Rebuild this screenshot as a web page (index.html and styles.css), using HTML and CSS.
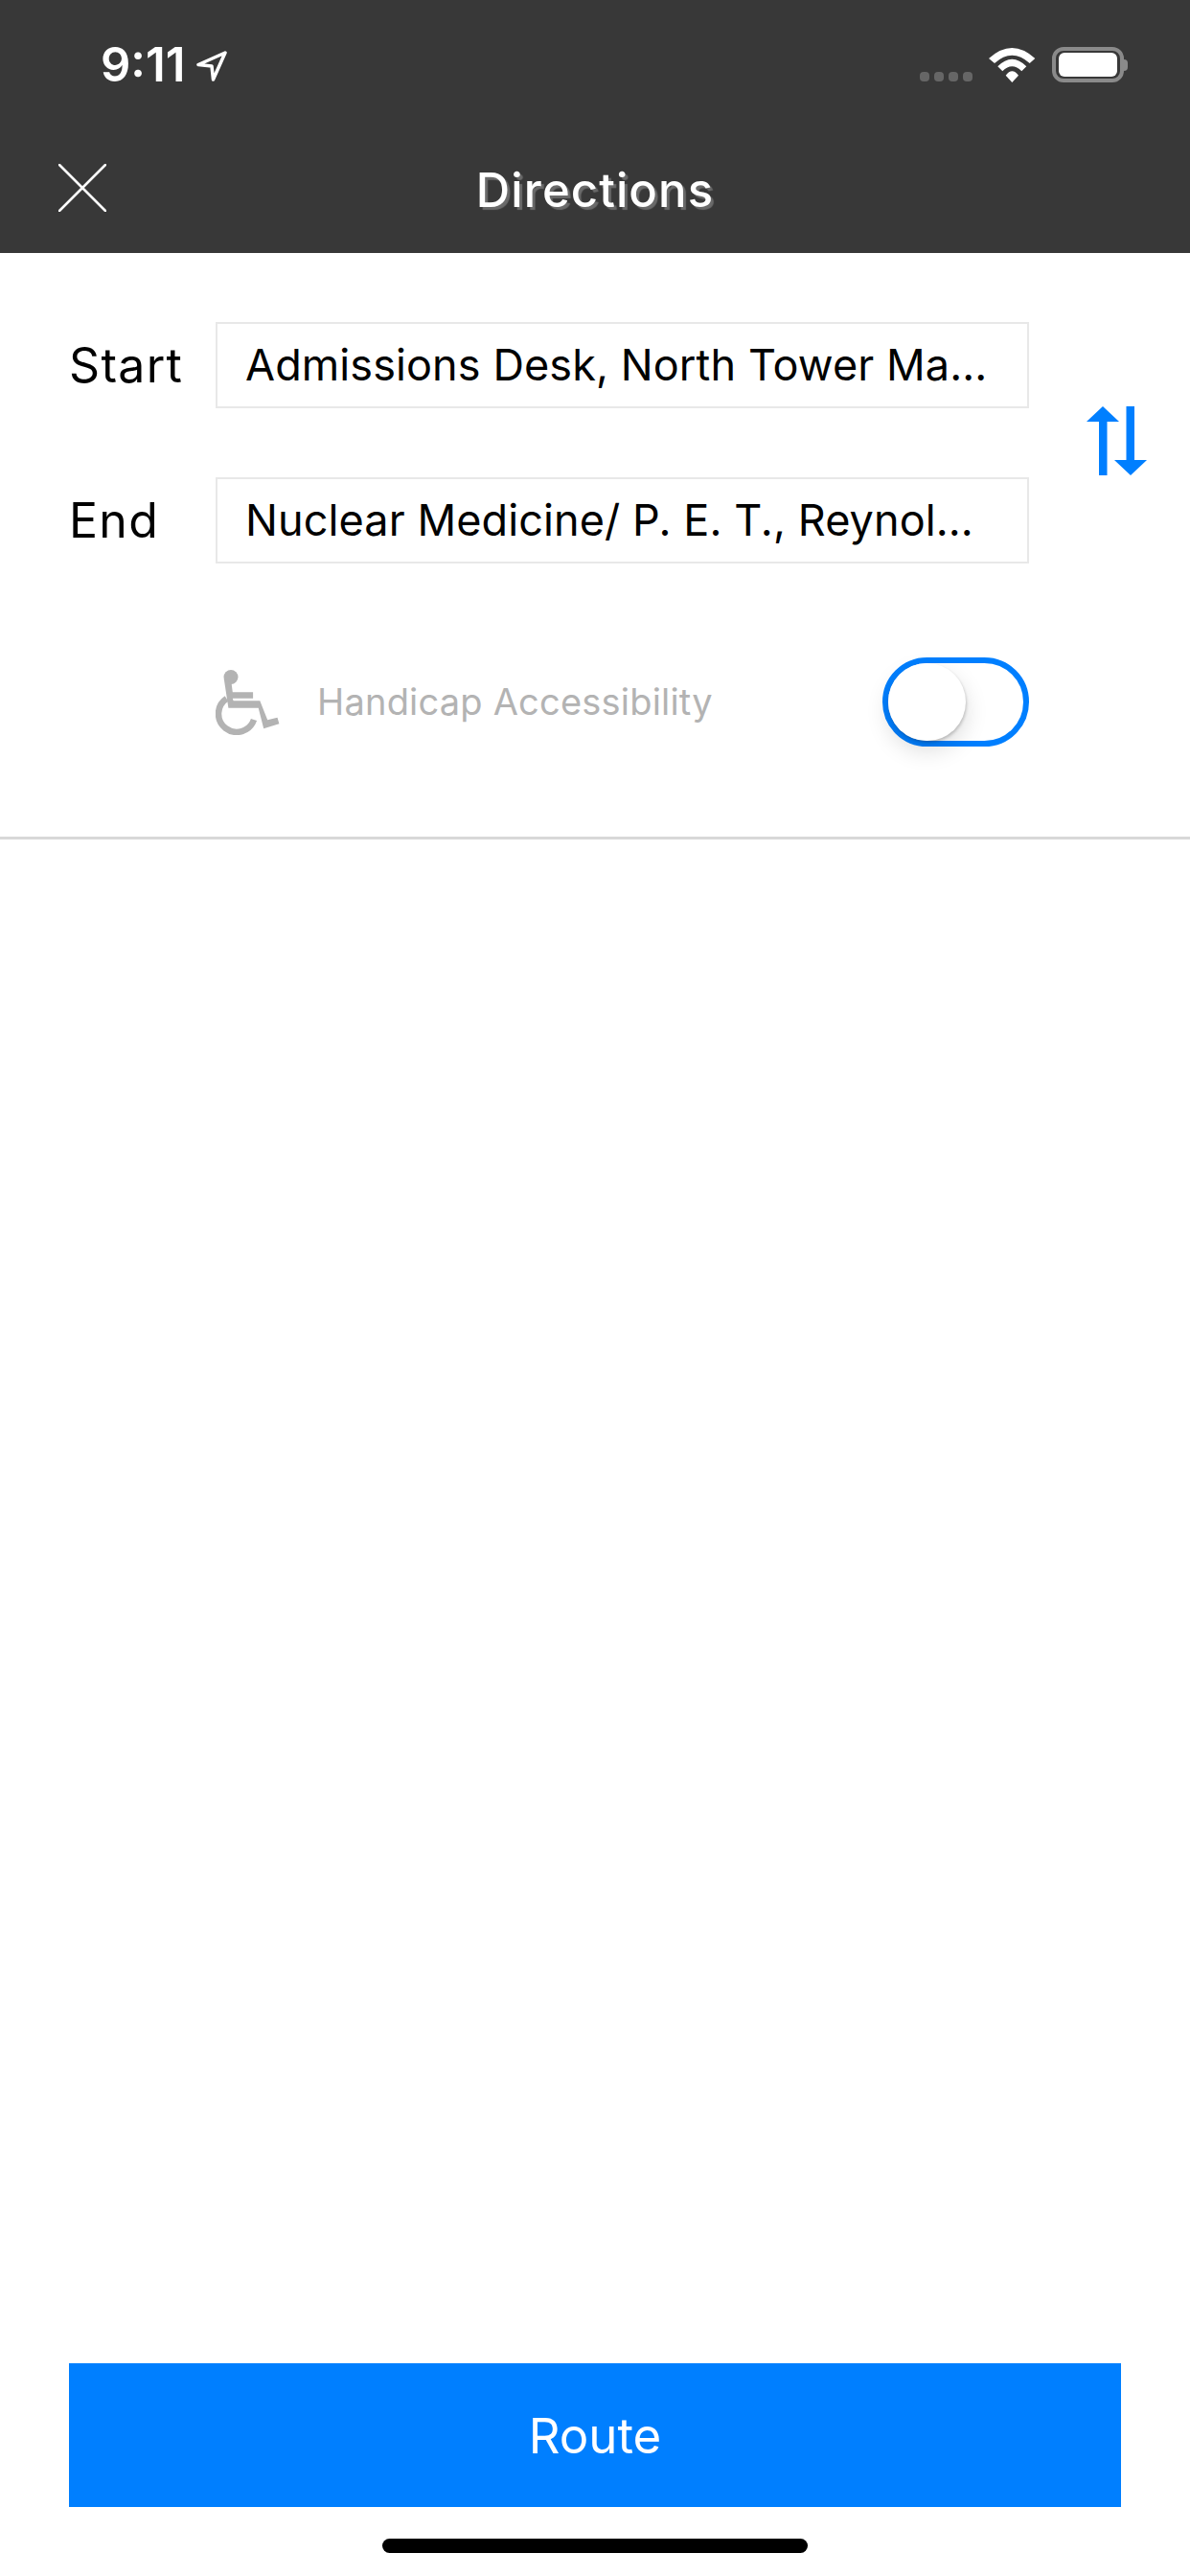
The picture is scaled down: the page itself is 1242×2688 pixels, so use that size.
FILE: index.html
```html
<!DOCTYPE html>
<html lang="en">
<head>
    <meta charset="UTF-8">
    <meta name="viewport" content="width=device-width, initial-scale=1.0">
    <title>Directions</title>
    <link rel="stylesheet" href="styles.css">
</head>
<body>
    <div class="screen">
        <div class="top-bar">
            <div class="status-bar">
                <div class="status-left">
                    <span class="status-time">9:11</span>
                    <svg class="location-icon" width="32" height="32" viewBox="0 0 32 32">
                        <path d="M30 2 L2 14.500 L16 16 L17.500 30 Z" fill="none" stroke="#fff" stroke-width="3.500" stroke-linejoin="round"/>
                    </svg>
                </div>
                <div class="status-right">
                    <div class="signal-dots"><i></i><i></i><i></i><i></i></div>
                    <svg class="wifi-icon" width="49" height="36" viewBox="0 0 49 36">
                        <path d="M0 11 Q24.300 -11 48.300 11 L42.700 16 Q24.300 -0.600 6 16 Z" fill="#fff"/>
                        <path d="M9.300 19.300 Q24.300 4.100 39.300 19.300 L34.300 24.300 Q24.300 14.300 14.300 24.300 Z" fill="#fff"/>
                        <path d="M17.700 28.700 Q24.300 19.900 31 28.700 L24.300 36 Z" fill="#fff"/>
                    </svg>
                    <div class="battery">
                        <div class="battery-level"></div>
                    </div>
                    <div class="battery-nub"></div>
                </div>
            </div>
            <div class="nav-bar">
                <svg class="close-icon" width="50" height="50" viewBox="0 0 50 50">
                    <path d="M1 1 L49 49 M49 1 L1 49" stroke="#fff" stroke-width="2.500" stroke-linecap="round"/>
                </svg>
                <h1 class="nav-title">Directions</h1>
            </div>
        </div>

        <div class="form">
            <div class="fields">
                <div class="field-row">
                    <label class="field-label">Start</label>
                    <div class="field-box">Admissions Desk, North Tower Ma...</div>
                </div>
                <div class="field-row">
                    <label class="field-label">End</label>
                    <div class="field-box">Nuclear Medicine/ P. E. T., Reynol...</div>
                </div>
            </div>
            <svg class="swap-icon" width="63" height="72" viewBox="0 0 63 72">
                <path d="M17 0 L34 16 L21.500 16 L21.500 72 L13 72 L13 16 L0 16 Z" fill="#007fff"/>
                <path d="M41.500 0 L50 0 L50 56 L63 56 L46 72 L29 56 L41.500 56 Z" fill="#007fff"/>
            </svg>
        </div>

        <div class="access-row">
            <svg class="wheelchair-icon" width="67" height="68" viewBox="0 0 67 68">
                <circle cx="16" cy="7.500" r="7.500" fill="#b3b3b3"/>
                <path d="M8.700 9 L13.400 39.700 L44.700 39.700 L50.200 61.300 L66.400 56.300 L64.500 49.700 L54.200 52.300 L46.300 32.300 L18.600 32.300 L17.800 29.700 L39.100 29.700 L39.100 23.300 L17.800 23.300 L16.600 14 Z" fill="#b3b3b3"/>
                <path d="M11.500 30 A19 19 0 1 0 40 52" fill="none" stroke="#b3b3b3" stroke-width="6.500"/>
            </svg>
            <span class="access-label">Handicap Accessibility</span>
            <div class="toggle">
                <div class="toggle-knob"></div>
            </div>
        </div>

        <div class="divider"></div>

        <div class="spacer"></div>

        <button class="route-button">Route</button>
        <div class="home-bar"></div>
    </div>
</body>
</html>
```

FILE: styles.css
```css
html, body {
    margin: 0;
    padding: 0;
    background-color: #fff;
}
.screen {
    width: 1242px;
    height: 2688px;
    display: flex;
    flex-direction: column;
    font-family: Inter, "Noto Sans", sans-serif;
    overflow: hidden;
}
.top-bar {
    height: 264px;
    background-color: #383838;
    color: #fff;
}
.status-bar {
    height: 132px;
    display: flex;
    justify-content: space-between;
    align-items: flex-start;
    padding: 49px 65px 0 105px;
    box-sizing: border-box;
}
.status-left {
    display: flex;
    align-items: center;
    height: 37px;
}
.status-time {
    font-size: 49px;
    font-weight: 600;
    line-height: 37px;
}
.location-icon {
    margin-left: 12px;
    margin-top: 2px;
}
.status-right {
    display: flex;
    align-items: center;
    height: 37px;
}
.signal-dots {
    display: flex;
    gap: 5px;
    align-self: flex-end;
    margin-bottom: 1px;
    margin-right: 17px;
}
.signal-dots i {
    width: 10px;
    height: 10px;
    border-radius: 4px;
    background-color: #666;
}
.wifi-icon {
    margin-right: 17px;
}
.battery {
    width: 75px;
    height: 37px;
    box-sizing: border-box;
    border: 4px solid #8a8a8a;
    border-radius: 12px;
    padding: 2px 3px;
}
.battery-level {
    height: 100%;
    background-color: #fff;
    border-radius: 6px;
}
.battery-nub {
    width: 4px;
    height: 12px;
    background-color: #8a8a8a;
    border-radius: 0 6px 6px 0;
}
.nav-bar {
    height: 132px;
    display: flex;
    align-items: center;
    justify-content: center;
    position: relative;
}
.close-icon {
    position: absolute;
    left: 61px;
    top: 39px;
}
.nav-title {
    margin: 2px 0 0;
    font-size: 49px;
    font-weight: 500;
    letter-spacing: 1.1px;
    line-height: 60px;
    text-shadow: 3px 3px 1px rgba(255, 255, 255, 0.25);
}
.form {
    display: flex;
    align-items: center;
    padding: 72px 0 0 72px;
}
.fields {
    display: flex;
    flex-direction: column;
    gap: 72px;
}
.field-row {
    display: flex;
    align-items: center;
}
.field-label {
    width: 153px;
    font-size: 50px;
    letter-spacing: 1.3px;
    color: #000;
}
.field-box {
    width: 849px;
    height: 90px;
    box-sizing: border-box;
    border: 2px solid #e8e8e8;
    padding-left: 29px;
    font-size: 45px;
    letter-spacing: 0.1px;
    line-height: 86px;
    color: #000;
    white-space: nowrap;
    overflow: hidden;
}
.swap-icon {
    margin-left: 60px;
    margin-bottom: 5px;
}
.access-row {
    display: flex;
    align-items: center;
    height: 93px;
    margin-top: 98px;
    padding: 0 168px 0 225px;
}
.access-label {
    margin-left: 39px;
    margin-bottom: 2px;
    font-size: 38px;
    letter-spacing: 0.2px;
    color: #b3b3b3;
}
.toggle {
    margin-left: auto;
    width: 153px;
    height: 93px;
    box-sizing: border-box;
    border: 6px solid #007fff;
    border-radius: 47px;
    background-color: #fff;
}
.toggle-knob {
    width: 81px;
    height: 81px;
    border-radius: 50%;
    background-color: #fff;
    box-shadow: 1px 2px 3px rgba(0, 0, 0, 0.18), 0 10px 24px rgba(0, 0, 0, 0.14);
}
.divider {
    height: 3px;
    margin-top: 94px;
    background-color: #d8d8d8;
}
.spacer {
    flex: 1;
}
.route-button {
    display: block;
    height: 150px;
    margin: 0 72px;
    border: none;
    background-color: #007fff;
    color: #fff;
    font-family: inherit;
    font-size: 51px;
}
.home-bar {
    width: 444px;
    height: 15px;
    margin: 33px auto 24px;
    border-radius: 8px;
    background-color: #000;
}
```
